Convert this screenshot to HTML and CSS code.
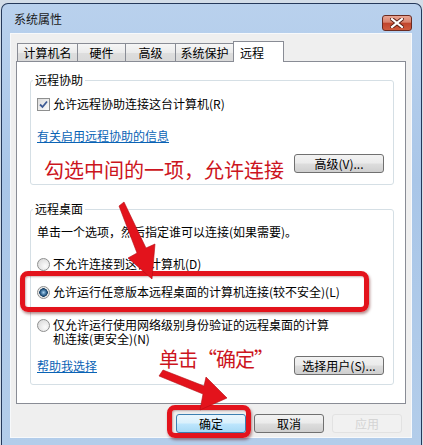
FILE: index.html
```html
<!DOCTYPE html>
<html lang="zh-CN">
<head>
  <meta charset="UTF-8" />
  <title>系统属性</title>
  <link rel="stylesheet" href="styles.css">
</head>
<body>

  <div class="window">
    <div class="titlebar">
      <span class="title">系统属性</span>
      <span class="close">
        <svg width="14" height="10" viewBox="0 0 14 10">
          <path d="M2 1 L12 9 M12 1 L2 9" stroke="#5a1e16" stroke-width="4" stroke-linecap="square" />
          <path d="M2 1 L12 9 M12 1 L2 9" stroke="#fff" stroke-width="2.2" stroke-linecap="square" />
        </svg>
      </span>
    </div>

    <div class="client">
      <div class="tabs">
        <span class="tab t1">计算机名</span>
        <span class="tab t2">硬件</span>
        <span class="tab t3">高级</span>
        <span class="tab t4">系统保护</span>
        <span class="tab active">远程</span>
      </div>

      <div class="panel">
        <fieldset class="group g1">
          <legend>远程协助</legend>
          <div class="row check-row">
            <span class="checkbox">
              <svg width="9" height="9" viewBox="0 0 9 9">
                <path d="M1 4.5 L3.5 7 L8 1.5" fill="none" stroke="#3d5a94" stroke-width="1.8" />
              </svg>
            </span>
            允许远程协助连接这台计算机(R)
          </div>
          <a href="#" class="link info-link">有关启用远程协助的信息</a>
          <div class="btn-row">
            <button class="btn">高级(V)...</button>
          </div>
        </fieldset>

        <fieldset class="group g2">
          <legend>远程桌面</legend>
          <p class="intro">单击一个选项，然后指定谁可以连接(如果需要)。</p>
          <div class="row radio-row r1"><span class="radio"></span>不允许连接到这台计算机(D)</div>
          <div class="row radio-row r2"><span class="radio on"></span>允许运行任意版本远程桌面的计算机连接(较不安全)(L)</div>
          <div class="row radio-row r3"><span class="radio"></span><span>仅允许运行使用网络级别身份验证的远程桌面的计算<br>机连接(更安全)(N)</span></div>
          <div class="help-row">
            <a href="#" class="link">帮助我选择</a>
            <button class="btn">选择用户(S)...</button>
          </div>
        </fieldset>
      </div>

      <div class="footer">
        <button class="btn btn-wide focus">确定</button>
        <button class="btn btn-wide">取消</button>
        <button class="btn btn-wide disabled">应用</button>
      </div>
    </div>

    <!-- 标注 -->
    <div class="note note1">勾选中间的一项，允许连接</div>
    <div class="note note2">单击“确定”</div>
    <div class="mark mark1"></div>
    <div class="mark mark2"></div>
    <svg class="arrows" width="423" height="445" viewBox="0 0 423 445">
      <polygon points="119,206 124,202 146,248 155,244 152,279 128,258 137,253" />
      <polygon points="159,376 163,370 204,386 206,377 227,398 200,410 203,394" />
    </svg>
  </div>

</body>
</html>
```

FILE: styles.css
```css
body {
  margin: 0;
  width: 423px;
  height: 445px;
  overflow: hidden;
  background: #d3dde8;
  font-family: "Noto Sans CJK SC", "Noto Sans", sans-serif;
  font-size: 12px;
  color: #000;
}
.window {
  position: relative;
  margin: 3px 1px 0 1px;
  height: 442px;
  box-sizing: border-box;
  padding: 0 9px 7px 8px;
  border: 1px solid #25395a;
  border-bottom: none;
  border-radius: 7px 7px 0 0;
  background: linear-gradient(180deg, #b9d1ed 0%, #a9c6e8 40%, #b3cdea 100%);
}
.titlebar {
  height: 29px;
  display: flex;
  align-items: center;
  justify-content: space-between;
}
.title {
  padding-left: 4px;
  margin-top: -1px;
  font-size: 12px;
  color: #1a1a1a;
}
.close {
  width: 30px;
  height: 16px;
  margin-top: 9px;
  display: flex;
  align-items: center;
  justify-content: center;
  box-sizing: border-box;
  border: 1px solid #6b2a20;
  border-radius: 3px;
  background: linear-gradient(180deg, #e9a594 0%, #d9826c 45%, #c0432b 50%, #cf5b3e 100%);
}
.client {
  height: 405px;
  box-sizing: border-box;
  padding: 7px 5px 0 5px;
  background: #efefef;
  border: 1px solid #f7f9fb;
}
.tabs {
  display: flex;
  align-items: flex-end;
  height: 20px;
  padding-left: 1px;
}
.tab {
  height: 18px;
  box-sizing: border-box;
  display: flex;
  align-items: center;
  justify-content: center;
  border: 1px solid #898c95;
  border-bottom: none;
  margin-right: -1px;
  background: linear-gradient(180deg, #f6f6f6 0%, #ebebeb 50%, #dedede 51%, #d9d9d9 100%);
  font-size: 12px;
}
.t1 { width: 61px; }
.t2 { width: 49px; }
.t3 { width: 51px; }
.t4 { width: 59px; }
.tab.active {
  width: 51px;
  height: 21px;
  margin-bottom: -1px;
  position: relative;
  z-index: 1;
  background: #fff;
  justify-content: flex-start;
  padding-left: 6px;
}
.panel {
  width: 390px;
  height: 343px;
  box-sizing: border-box;
  border: 1px solid #898c95;
  background: #fff;
  padding: 11px 11px 0 13px;
}
.group {
  margin: 0;
  padding: 0 9px 0 6px;
  border: 1px solid #d5dfe5;
  border-radius: 3px;
}
.group legend {
  padding: 0 2px;
  margin-left: -4px;
  line-height: 14px;
}
.row {
  display: flex;
  align-items: center;
  line-height: 14px;
}
.check-row {
  margin-top: 10px;
}
.checkbox {
  width: 13px;
  height: 13px;
  box-sizing: border-box;
  border: 1px solid #8e8f8f;
  background: linear-gradient(135deg, #dcdcdc, #fbfbfb);
  display: flex;
  align-items: center;
  justify-content: center;
  margin-right: 3px;
}
.link {
  display: inline-block;
  color: #0a63b5;
  text-decoration: underline;
  line-height: 14px;
}
.info-link {
  margin-top: 18px;
}
.btn-row {
  display: flex;
  justify-content: flex-end;
  margin-top: 10px;
  padding-bottom: 11px;
}
.btn {
  width: 90px;
  height: 19px;
  padding: 0;
  font-family: inherit;
  font-size: 12px;
  color: #000;
  border: 1px solid #707070;
  border-radius: 3px;
  background: linear-gradient(180deg, #f2f2f2 0%, #ebebeb 48%, #dddddd 52%, #cfcfcf 100%);
}
.g2 {
  margin-top: 17px;
}
.intro {
  margin: 9px 0 0 0;
  line-height: 14px;
}
.radio {
  width: 13px;
  height: 13px;
  box-sizing: border-box;
  border-radius: 50%;
  border: 1px solid #8e8f8f;
  background: radial-gradient(circle at 65% 65%, #fbfbfb, #d4d4d4);
  margin-right: 3px;
  flex: none;
}
.radio.on {
  background: radial-gradient(circle, #a6d1f1 0, #2c5f8c 3px, #193e60 4px, #e6e6e6 4.5px, #f4f4f4 100%);
}
.r1 { margin-top: 18px; }
.r2 { margin-top: 14px; }
.r3 {
  margin-top: 19px;
  align-items: flex-start;
  line-height: 14px;
}
.r3 .radio { margin-top: 1px; }
.help-row {
  display: flex;
  justify-content: space-between;
  align-items: center;
  margin-top: 10px;
  padding-bottom: 9px;
}
.footer {
  display: flex;
  justify-content: flex-end;
  gap: 8px;
  margin-top: 10px;
  padding-right: 4px;
}
.btn-wide {
  width: 70px;
}
.btn.focus {
  border-color: #3c7fb1;
  background: linear-gradient(180deg, #eaf6fd 0%, #d9f0fc 48%, #bee6fd 52%, #a7d9f5 100%);
}
.btn.disabled {
  color: #d4d4d4;
  border-color: #e2e2e2;
  background: #f1f1f1;
}
.note {
  position: absolute;
  font-size: 20px;
  line-height: 24px;
  color: #cc1420;
  white-space: nowrap;
}
.note1 {
  left: 42px;
  top: 154px;
}
.note2 {
  left: 157px;
  top: 343px;
  letter-spacing: -1px;
}
.mark {
  position: absolute;
  box-sizing: border-box;
  border: 5px solid #e3131c;
  border-radius: 8px;
  box-shadow: 1px 2px 3px rgba(90, 0, 0, 0.45), inset 1px 1px 2px rgba(90, 0, 0, 0.3);
}
.mark1 {
  left: 18px;
  top: 267px;
  width: 349px;
  height: 41px;
}
.mark2 {
  left: 165px;
  top: 401px;
  width: 84px;
  height: 33px;
}
.arrows {
  position: absolute;
  left: -2px;
  top: -4px;
  pointer-events: none;
}
.arrows polygon {
  fill: #e3131c;
  stroke: #b50d14;
  stroke-width: 0.6;
}
```
